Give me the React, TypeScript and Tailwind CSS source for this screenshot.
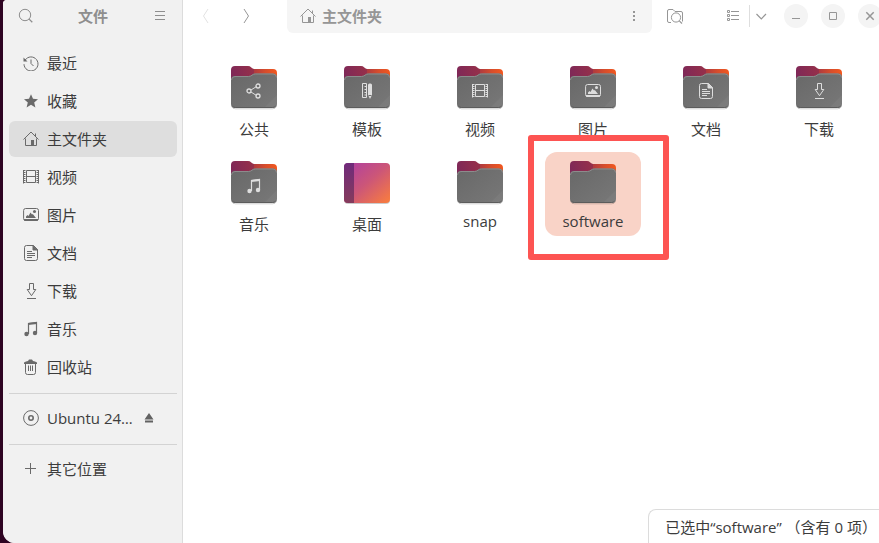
import type { ReactNode } from 'react';

type Glyph =
  | 'recent' | 'star' | 'home' | 'film' | 'image' | 'doc' | 'download' | 'music' | 'trash'
  | 'disc' | 'plus' | 'share' | 'template' | 'search' | 'menu' | 'back' | 'forward' | 'dots'
  | 'folderSearch' | 'list' | 'chevron' | 'minimize' | 'maximize' | 'close' | 'eject';

const shapes: Record<Glyph, ReactNode> = {
  recent: (
    <>
      <path d="M2.2 5A7 7 0 1 1 1 9.2" />
      <path d="M.5 2.5v4h4z" fill="currentColor" stroke="none" />
      <path d="M8 4.5v4l2.5 2.5" />
    </>
  ),
  star: <path d="M8 1.2l2 4.600 5 .4-3.800 3.300 1.200 4.900L8 11.800l-4.400 2.600 1.200-4.900L1 6.200l5-.4z" fill="currentColor" stroke="none" />,
  home: (
    <>
      <path d="M.5 8.500L8 1l7.500 7.500M2.500 7.500v7h11v-7M12.500 2.500v3" />
      <path d="M8 9h3v5.500H8z" fill="currentColor" stroke="none" />
    </>
  ),
  film: (
    <>
      <path d="M3.500 1.500h9v12h-9zM3.500 7.500h9" />
      <path d="M1.500 1v13.500M14.500 1v13.500" strokeDasharray="1 1" strokeWidth="2" />
      <path d="M.5 1v13.500M15.500 1v13.500" />
    </>
  ),
  image: (
    <>
      <rect x=".6" y="1.500" width="14.900" height="12" rx="2" />
      <path d="M1 12h14v1a1 1 0 0 1-1 1H2a1 1 0 0 1-1-1z" fill="currentColor" stroke="none" />
      <path d="M3 11V9.500L4.500 8l1 1L7.500 5.500l1.500 2 .8-.5L13 11z" fill="currentColor" stroke="none" />
      <circle cx="11.500" cy="4.500" r="1.500" fill="currentColor" stroke="none" />
    </>
  ),
  doc: (
    <>
      <path d="M3.500.5h7l4 4v9a2 2 0 0 1-2 2h-9a2 2 0 0 1-2-2v-11a2 2 0 0 1 2-2z" />
      <path d="M10 .5v4.500h4.500z" fill="currentColor" />
      <path d="M4 6.500h5M4 8.500h8M4 10.500h8M4 12.500h5" />
    </>
  ),
  download: <path d="M6.500.5h4v6h2.300L8.500 12.700 4.200 6.500h2.300zM4 15.500h9" />,
  music: (
    <>
      <path d="M5.500 13V2.500l8-1V12" strokeWidth="1.200" />
      <path d="M5 2l9-1v2L5 4z" fill="currentColor" stroke="none" />
      <circle cx="3.500" cy="13" r="2.200" fill="currentColor" stroke="none" />
      <circle cx="12" cy="12" r="2.200" fill="currentColor" stroke="none" />
    </>
  ),
  trash: (
    <>
      <path d="M2.500 4.500v9a2 2 0 0 0 2 2h6a2 2 0 0 0 2-2v-9M5.500 6.500v5.500M7.500 6.500v5.500M9.500 6.500v5.500" />
      <path d="M1 5V3.500Q3 2 5 2l1-1.500h3L10 2q2 0 4 1.500V5z" fill="currentColor" stroke="none" />
    </>
  ),
  disc: (
    <>
      <circle cx="8" cy="8" r="7.400" />
      <circle cx="8" cy="8" r="2.200" strokeWidth="1.600" />
    </>
  ),
  plus: <path d="M2 7.500h11M7.500 2v11" />,
  share: (
    <>
      <path d="M5 7l5.500-3.500M5 9l5.500 3.500" />
      <circle cx="3" cy="8" r="2" strokeWidth="1.300" />
      <circle cx="12" cy="3" r="2" strokeWidth="1.300" />
      <circle cx="12" cy="13" r="2" strokeWidth="1.300" />
    </>
  ),
  template: (
    <>
      <path d="M3.500.5h4v14h-4zM5.500 3.500h2M5.500 6.500h2M5.500 9.500h2M5.500 12h2" />
      <path d="M9 2a1.500 1.500 0 0 1 1.500-1.500h1A1.500 1.500 0 0 1 13 2v10l-2 4-2-4z" fill="currentColor" stroke="none" />
      <path d="M9.500 12.500h3" stroke="#707070" />
    </>
  ),
  search: (
    <>
      <circle cx="7" cy="7" r="5.700" />
      <path d="M11.100 11.100L14.300 14.300" strokeWidth="1.300" />
    </>
  ),
  menu: <path d="M3 3.500h10M3 7.500h10M3 11.500h10" />,
  back: <path d="M10 1L5.500 8l4.500 7" />,
  forward: <path d="M6 1l4.500 7L6 15" />,
  dots: <path d="M7 3h2v2H7zM7 7h2v2H7zM7 11h2v2H7z" fill="currentColor" stroke="none" />,
  folderSearch: (
    <>
      <path d="M4 14.500H2a1.500 1.500 0 0 1-1.500-1.500V3A1.500 1.500 0 0 1 2 1.500h4l2 2h6A1.500 1.500 0 0 1 15.500 5v8.500" />
      <circle cx="9" cy="9.500" r="4.600" />
      <path d="M12.300 12.800L15 15.500" strokeWidth="1.200" />
    </>
  ),
  list: <path d="M2.500 2.500h2v2h-2zM2.500 6.500h2v2h-2zM2.500 10.500h2v2h-2zM6 3.500h8M6 7.500h8M6 11.500h8" />,
  chevron: <path d="M2.500 6l4.800 4.800L12 6" strokeWidth="1.200" />,
  minimize: <path d="M4 10.500h8" />,
  maximize: <path d="M4.500 4.500h7v7h-7z" />,
  close: <path d="M4.300 4.300l7.400 7.400M11.700 4.300l-7.400 7.400" strokeWidth="1.500" />,
  eject: <path d="M8 3l4.500 6.500h-9zM4 10.500h8v2H4z" fill="currentColor" stroke="none" />,
};

function Icon({ name }: { name: Glyph }) {
  return (
    <svg viewBox="0 0 16 16" className="size-4 shrink-0" fill="none" stroke="currentColor" aria-hidden="true">
      {shapes[name]}
    </svg>
  );
}

function FolderIcon({ emblem }: { emblem?: Glyph }) {
  return (
    <svg viewBox="0 0 48 48" className="size-12" fill="none" aria-hidden="true">
      <path d="M1.500 43.500q1 2.300 4 2.300h37q3 0 4-2.300" stroke="#000" strokeOpacity=".2" />
      <path d="M18 6h25a4 4 0 0 1 4 4v10H18z" fill="url(#folder-back)" />
      <path d="M1 7a4 4 0 0 1 4-4h13q2 0 3 1.200T24 6v14H1z" fill="url(#folder-tab)" />
      <path d="M1 17a4 4 0 0 1 4-4h13.500q2 0 3.500-1.300t3.500-1.200h17.500a4 4 0 0 1 4 4V41a4 4 0 0 1-4 4H5a4 4 0 0 1-4-4z" fill="url(#folder-front)" />
      <path d="M1.500 17a3.500 3.500 0 0 1 3.500-3.500h13.500q2 0 3.500-1.300t3.500-1.200h17.500a3.500 3.500 0 0 1 3.500 3.500" stroke="#8c8c8c" />
      <path d="M47 32v9a4 4 0 0 1-4 4h-9z" fill="#fff" fillOpacity=".04" />
      <path d="M2.500 43q1 1.500 3 1.500h37q2 0 3-1.500" stroke="#5c5c5c" />
      {emblem && (
        <g transform="translate(16 20)" color="#dedede" stroke="currentColor">
          {shapes[emblem]}
        </g>
      )}
    </svg>
  );
}

function DesktopIcon() {
  return (
    <svg viewBox="0 0 48 48" className="size-12" aria-hidden="true">
      <rect x="1" y="6" width="46" height="40" rx="4" fill="#000" fillOpacity=".2" />
      <rect x="1" y="5" width="46" height="40" rx="4" fill="url(#desktop)" />
      <path d="M11 5H5a4 4 0 0 0-4 4v32a4 4 0 0 0 4 4h6z" fill="url(#dock)" />
    </svg>
  );
}

function Gradients() {
  return (
    <svg className="absolute size-0" aria-hidden="true">
      <defs>
        <linearGradient id="folder-tab" x1="0" y1=".5" x2="1" y2=".3">
          <stop offset="0" stopColor="#7e2858" />
          <stop offset="1" stopColor="#96304a" />
        </linearGradient>
        <linearGradient id="folder-back" x1="0" y1="0" x2="1" y2="0">
          <stop offset=".2" stopColor="#ae3a40" />
          <stop offset=".6" stopColor="#d64d2c" />
          <stop offset="1" stopColor="#f2581f" />
        </linearGradient>
        <linearGradient id="folder-front" x1="0" y1="0" x2="1" y2="1">
          <stop offset="0" stopColor="#686868" />
          <stop offset="1" stopColor="#787878" />
        </linearGradient>
        <linearGradient id="desktop" x1=".1" y1="0" x2="1" y2=".9">
          <stop offset="0" stopColor="#b040a0" />
          <stop offset=".5" stopColor="#cc5678" />
          <stop offset="1" stopColor="#f67a42" />
        </linearGradient>
        <linearGradient id="dock" x1="0" y1="0" x2="0" y2="1">
          <stop offset="0" stopColor="#702b7b" />
          <stop offset="1" stopColor="#853b5c" />
        </linearGradient>
      </defs>
    </svg>
  );
}

const places: { icon: Glyph; label: string }[] = [
  { icon: 'recent', label: '最近' },
  { icon: 'star', label: '收藏' },
  { icon: 'home', label: '主文件夹' },
  { icon: 'film', label: '视频' },
  { icon: 'image', label: '图片' },
  { icon: 'doc', label: '文档' },
  { icon: 'download', label: '下载' },
  { icon: 'music', label: '音乐' },
  { icon: 'trash', label: '回收站' },
];

const files: { label: string; emblem?: Glyph; latin?: boolean; desktop?: boolean; selected?: boolean }[] = [
  { label: '公共', emblem: 'share' },
  { label: '模板', emblem: 'template' },
  { label: '视频', emblem: 'film' },
  { label: '图片', emblem: 'image' },
  { label: '文档', emblem: 'doc' },
  { label: '下载', emblem: 'download' },
  { label: '音乐', emblem: 'music' },
  { label: '桌面', desktop: true },
  { label: 'snap', latin: true },
  { label: 'software', latin: true, selected: true },
];

function Place({ icon, label, active }: { icon: Glyph; label: string; active?: boolean }) {
  return (
    <button
      type="button"
      aria-current={active ? 'page' : undefined}
      className={`flex h-9 w-full items-center gap-2 rounded-md pl-3.5 text-left ${active ? 'bg-[#dedede]' : ''}`}
    >
      <span className="text-[#6a6a6a]"><Icon name={icon} /></span>
      {label}
    </button>
  );
}

function Sidebar() {
  return (
    <aside className="flex w-[180px] shrink-0 flex-col border-r border-[#dcdcdc] bg-[#f1f1f1]">
      <header className="flex h-8 items-center justify-between pl-[15px] pr-3.5 text-[#8e8e8e]">
        <button type="button" aria-label="搜索"><Icon name="search" /></button>
        <h1 className="font-bold">文件</h1>
        <button type="button" aria-label="菜单"><Icon name="menu" /></button>
      </header>
      <nav className="flex flex-col pl-1.5 pr-[5px] pt-[13px]">
        <div className="flex flex-col gap-0.5">
          {places.map((p) => (
            <Place key={p.label} {...p} active={p.icon === 'home'} />
          ))}
        </div>
        <hr className="mb-1.5 mt-2 border-[#d3d3d3]" />
        <div className="flex items-center">
          <Place icon="disc" label="Ubuntu 24…" />
          <button type="button" aria-label="弹出" className="-ml-9 mr-[19px] text-[#626262]"><Icon name="eject" /></button>
        </div>
        <hr className="mb-1.5 mt-2 border-[#d3d3d3]" />
        <Place icon="plus" label="其它位置" />
      </nav>
    </aside>
  );
}

function WindowButton({ icon, label }: { icon: Glyph; label: string }) {
  return (
    <button type="button" aria-label={label} className="flex size-6 shrink-0 items-center justify-center rounded-full bg-[#f4f4f4]">
      <Icon name={icon} />
    </button>
  );
}

function Toolbar() {
  const tool = 'flex h-8 w-10 shrink-0 items-center justify-center';
  return (
    <header className="flex h-[33px] items-start pl-[3px] text-[#969696]">
      <button type="button" aria-label="后退" disabled className={`${tool} text-[#e2e2e2]`}><Icon name="back" /></button>
      <button type="button" aria-label="前进" className={tool}><Icon name="forward" /></button>
      <div className="ml-[21px] flex h-[33px] min-w-0 flex-1 items-center rounded-b-md bg-[#f5f5f5] pb-px pl-[13px] pr-2.5">
        <button type="button" className="flex items-center gap-1.5 font-bold">
          <Icon name="home" />
          主文件夹
        </button>
        <button type="button" aria-label="更多" className="ml-auto"><Icon name="dots" /></button>
      </div>
      <button type="button" aria-label="在文件夹中搜索" className={`${tool} ml-[3px]`}><Icon name="folderSearch" /></button>
      <button type="button" aria-label="列表视图" className="ml-[22px] flex h-8 w-8 shrink-0 items-center justify-center"><Icon name="list" /></button>
      <div className="mt-[5px] h-[22px] w-px shrink-0 bg-[#dedede]" />
      <button type="button" aria-label="视图选项" className="flex h-8 w-6 shrink-0 items-center justify-center"><Icon name="chevron" /></button>
      <div className="-mr-[3px] ml-2.5 flex shrink-0 gap-[13px] pt-1">
        <WindowButton icon="minimize" label="最小化" />
        <WindowButton icon="maximize" label="最大化" />
        <WindowButton icon="close" label="关闭" />
      </div>
    </header>
  );
}

export default function App() {
  return (
    <div className="min-h-screen bg-[#2e0422] pl-[3px] font-['Open_Sans','Noto_Sans_CJK_SC',sans-serif] text-[15px] leading-6 text-[#3c3c3c]">
      <Gradients />
      <div className="flex min-h-screen overflow-hidden rounded-bl-xl rounded-tl-sm bg-white">
        <Sidebar />
        <main className="flex min-w-0 flex-1 flex-col">
          <Toolbar />
          <ul className="grid grid-cols-[repeat(auto-fill,96px)] items-start gap-x-[17px] gap-y-[5px] pl-[23px] pt-6">
            {files.map((f) => (
              <li key={f.label} className="relative">
                <button
                  type="button"
                  className={`flex w-full flex-col items-center gap-1.5 rounded-xl py-1.5 ${f.selected ? 'bg-[#f9d3c7]' : ''} ${f.latin ? 'leading-[18px]' : ''}`}
                >
                  {f.desktop ? <DesktopIcon /> : <FolderIcon emblem={f.emblem} />}
                  <span>{f.label}</span>
                </button>
                {f.selected && (
                  <div className="pointer-events-none absolute -bottom-6 -left-[17px] -right-7 -top-[17px] rounded-[3px] border-6 border-[#fd5452]" />
                )}
              </li>
            ))}
          </ul>
          <footer className="mt-auto flex h-[34px] items-center self-end whitespace-nowrap rounded-tl-lg border-l border-t border-[#dcdcdc] pl-4 pr-0.5">
            已选中“software” （含有 0 项）
          </footer>
        </main>
      </div>
    </div>
  );
}
